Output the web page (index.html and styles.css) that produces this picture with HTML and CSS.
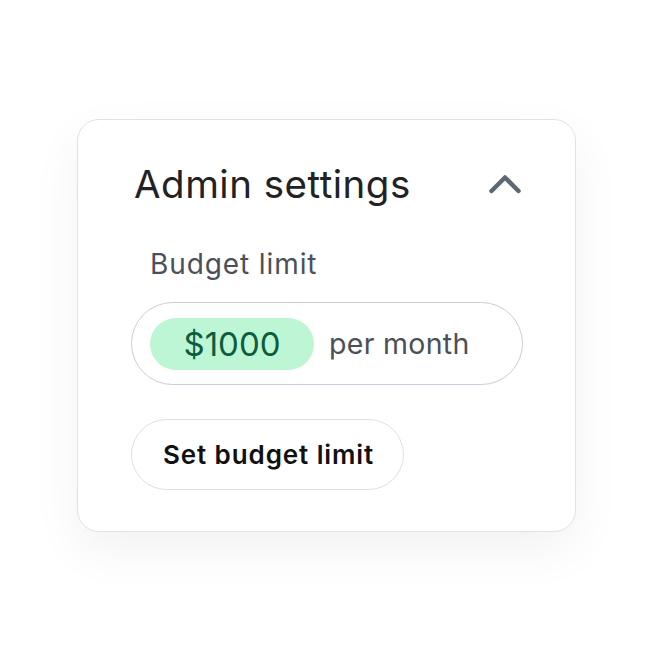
FILE: index.html
```html
<!DOCTYPE html>
<html lang="en">
<head>
    <meta charset="UTF-8">
    <title>Admin settings</title>
    <link rel="stylesheet" href="styles.css">
</head>
<body>
    <section class="card">
        <header class="card-head">
            <h2>Admin settings</h2>
            <svg class="chevron" width="34" height="22" viewBox="0 0 34 22">
                <path d="M3.5 18 L17 4.5 L30.5 18" fill="none" stroke="#5d6873" stroke-width="4.5" stroke-linecap="round" stroke-linejoin="round"/>
            </svg>
        </header>
        <label class="field-label">Budget limit</label>
        <div class="budget-field">
            <span class="amount">$1000</span>
            <span class="period">per month</span>
        </div>
        <button class="btn">Set budget limit</button>
    </section>
</body>
</html>
```
FILE: styles.css
```css
html, body {
    background: #fff;
}

body {
    margin: 0;
    min-height: 651px;
    padding: 119px 0 0 77px;
    box-sizing: border-box;
    font-family: Inter, "Noto Sans", sans-serif;
}

.card {
    box-sizing: border-box;
    width: 499px;
    height: 413px;
    padding: 41px 53px 0 53px;
    border: 1.5px solid #e2e2e2;
    border-radius: 22px;
    background: #fff;
    box-shadow: 0 18px 50px rgba(0, 0, 0, 0.055);
}

.card-head {
    display: flex;
    align-items: center;
    justify-content: space-between;
    padding-left: 3px;
}

h2 {
    margin: 0;
    font-size: 38.5px;
    font-weight: 400;
    letter-spacing: 0.5px;
    color: #222;
}

.field-label {
    display: block;
    margin: 40px 0 0 19px;
    font-size: 28px;
    letter-spacing: 0.9px;
    color: #4b5058;
}

.budget-field {
    box-sizing: border-box;
    display: flex;
    align-items: center;
    gap: 15px;
    width: 392px;
    height: 83px;
    margin-top: 21px;
    padding: 0 18px;
    border: 1.5px solid #c5cfd9;
    border-radius: 42px;
}

.amount {
    display: flex;
    align-items: center;
    justify-content: center;
    width: 164px;
    height: 52px;
    border-radius: 26px;
    background: #bdf6d4;
    color: #0d5c40;
    font-size: 33px;
}

.period {
    font-size: 28.5px;
    letter-spacing: 0.3px;
    color: #4b5058;
}

.btn {
    display: block;
    box-sizing: border-box;
    height: 71px;
    margin-top: 34px;
    padding: 0 29px 0 31px;
    border: 1.5px solid #e0e0e0;
    border-radius: 36px;
    background: #fff;
    font-family: Inter, "Noto Sans", sans-serif;
    font-size: 26px;
    font-weight: 600;
    letter-spacing: 0.9px;
    color: #111;
}
```
